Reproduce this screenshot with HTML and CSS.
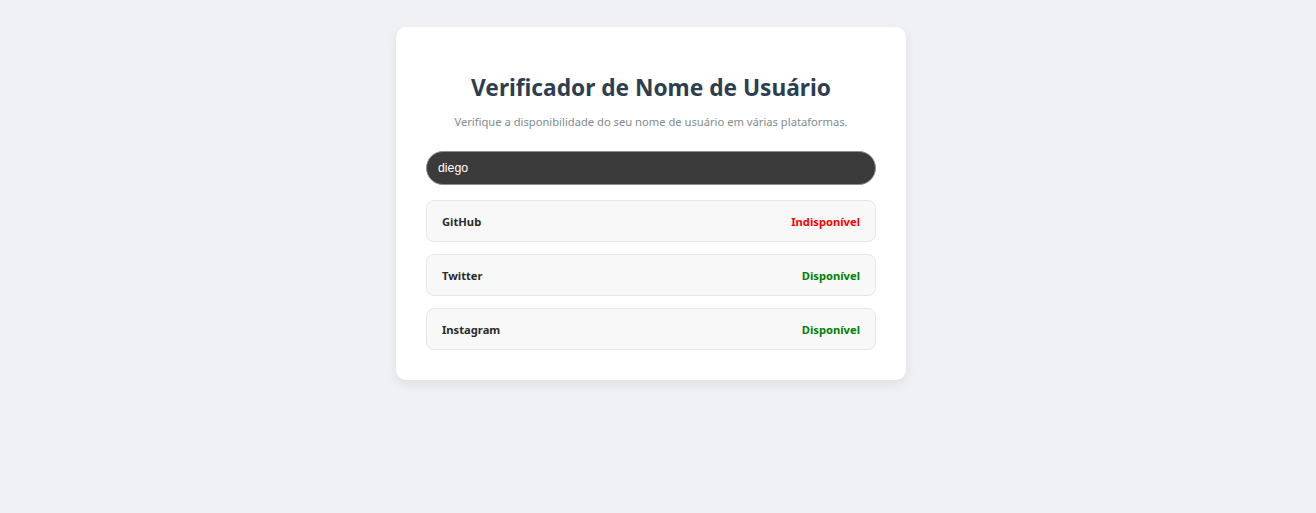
FILE: index.html
```html
<!DOCTYPE html>
<html lang="pt-BR">
<head>
<meta charset="utf-8">
<title>Verificador de Nome de Usuário</title>
<link rel="stylesheet" href="styles.css">
</head>
<body>
<main class="card">
  <h1 class="title">Verificador de Nome de Usuário</h1>
  <p class="subtitle">Verifique a disponibilidade do seu nome de usuário em várias plataformas.</p>
  <input class="search" type="text" value="diego">
  <ul class="results">
    <li class="result"><span class="platform">GitHub</span><span class="status unavailable">Indisponível</span></li>
    <li class="result"><span class="platform">Twitter</span><span class="status available">Disponível</span></li>
    <li class="result"><span class="platform">Instagram</span><span class="status available">Disponível</span></li>
  </ul>
</main>
</body>
</html>
```
FILE: styles.css
```css
* { box-sizing: border-box; }
html, body { margin: 0; padding: 0; }
body {
  background: #f0f1f5;
  font-family: "Noto Sans", "Open Sans", sans-serif;
  display: flex;
  justify-content: center;
  padding: 27px 14px 0 0;
  min-height: 513px;
}
.card {
  width: 510px;
  background: #ffffff;
  border-radius: 10px;
  box-shadow: 0 4px 12px rgba(0, 0, 0, 0.08);
  padding: 40px 30px 30px;
  display: flex;
  flex-direction: column;
  align-self: flex-start;
}
.title {
  margin: 0;
  text-align: center;
  font-size: 22.7px;
  font-weight: 700;
  line-height: 41px;
  color: #2c3e50;
}
.subtitle {
  margin: 5px 0 20px;
  text-align: center;
  font-size: 11.2px;
  line-height: 18px;
  color: #7f8c8d;
}
.search {
  width: 450px;
  height: 34px;
  border-radius: 17px;
  border: 1px solid #8e8e8e;
  background: #3b3b3b;
  color: #ffffff;
  font-family: "Liberation Sans", Arial, sans-serif;
  font-size: 12.3px;
  padding: 0 11px;
  outline: none;
}
.results {
  list-style: none;
  margin: 15px 0 0;
  padding: 0;
  display: flex;
  flex-direction: column;
  gap: 12px;
}
.result {
  height: 42px;
  display: flex;
  align-items: center;
  justify-content: space-between;
  padding: 0 15px;
  background: #f8f8f8;
  border: 1px solid #e6e6e6;
  border-radius: 8px;
  font-size: 11.2px;
  font-weight: 700;
}
.platform { color: #2a2a2a; }
.unavailable { color: #ff0000; }
.available { color: #008000; }
```
